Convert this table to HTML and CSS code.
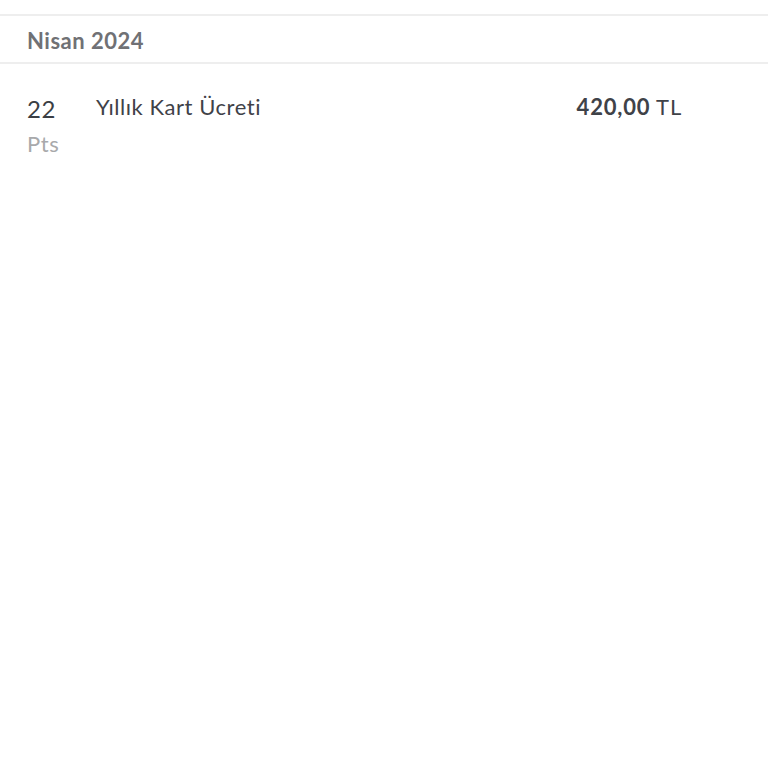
FILE: index.html
```html
<!DOCTYPE html>
<html lang="tr">
<head>
    <meta charset="UTF-8">
    <title>Hareketler</title>
    <link rel="stylesheet" href="styles.css">
</head>
<body>

    <div class="top-gap"></div>

    <div class="month">Nisan 2024</div>

    <div class="list">
        <div class="row">
            <div class="points">
                <span class="num">22</span>
                <span class="unit">Pts</span>
            </div>
            <div class="desc">Yıllık Kart Ücreti</div>
            <div class="amount"><b>420,00</b> TL</div>
        </div>
    </div>

</body>
</html>
```
FILE: styles.css
```css
html, body{
    height: 100%;
}

body{
    margin: 0;
    background: white;
    font-family: Lato, "Open Sans", sans-serif;
    overflow: hidden;
}

.top-gap{
    height: 14px;
    border-bottom: 2px solid #eeeeee;
}

.month{
    height: 43px;
    padding-left: 27px;
    padding-top: 3px;
    display: flex;
    align-items: center;
    font-size: 22px;
    font-weight: 700;
    letter-spacing: 0.5px;
    color: #707175;
    border-bottom: 2px solid #eeeeee;
}

.row{
    display: flex;
    padding: 28px 86px 0 27px;
}

.points{
    display: flex;
    flex-direction: column;
    width: 69px;
}

.num{
    font-size: 24px;
    color: #3b3e44;
    line-height: 34px;
    letter-spacing: 0.5px;
}

.unit{
    font-size: 22px;
    color: #a8a9ab;
    line-height: 36px;
    letter-spacing: 0.6px;
}

.desc{
    flex: 1;
    font-size: 22px;
    color: #3f4248;
    line-height: 30px;
    letter-spacing: 0.55px;
}

.amount{
    font-size: 22px;
    color: #3f4248;
    line-height: 30px;
    letter-spacing: 0.8px;
}

.amount b{
    font-weight: 700;
}
```
